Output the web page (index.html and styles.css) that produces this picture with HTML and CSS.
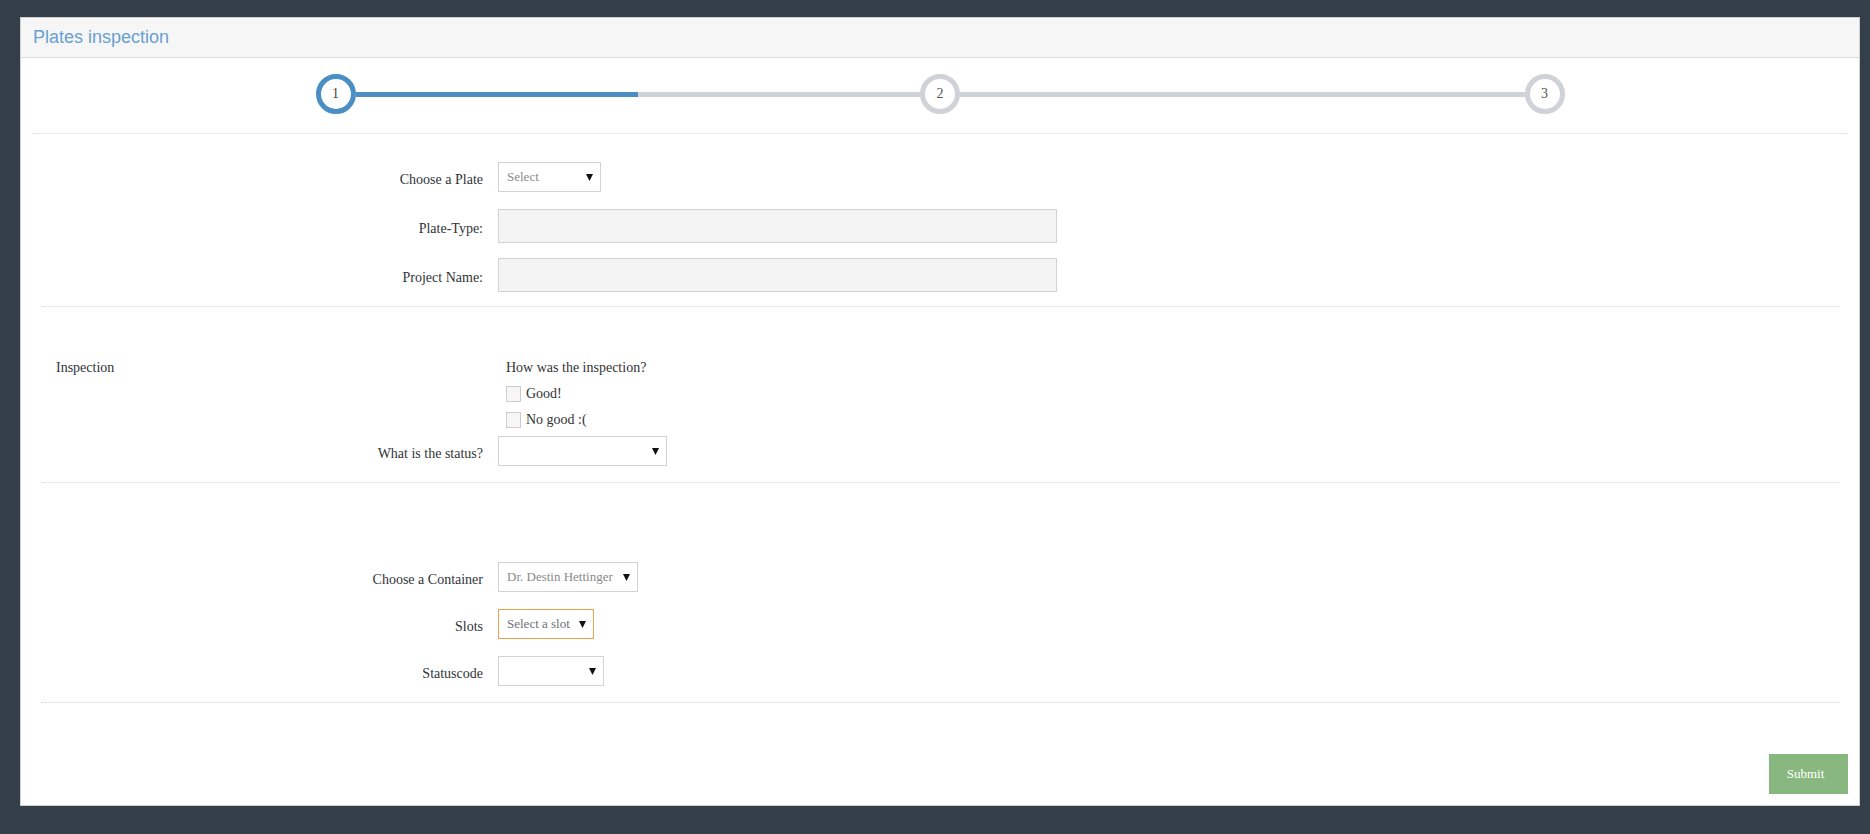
FILE: index.html
```html
<!DOCTYPE html>
<html lang="en">
<head>
<meta charset="utf-8">
<title>Plates inspection</title>
<link rel="stylesheet" href="styles.css">
</head>
<body>
<div class="card">
  <div class="card-header">Plates inspection</div>

  <div class="stepper-wrap">
    <div class="stepper">
      <div class="step active">1</div>
      <div class="track half"></div>
      <div class="step">2</div>
      <div class="track"></div>
      <div class="step">3</div>
    </div>
  </div>

  <section class="section s-plate">
    <div class="row r-select">
      <label class="lbl">Choose a Plate</label>
      <div class="select w-plate"><span class="ph">Select</span><svg class="caret" viewBox="0 0 7 7" width="7" height="7"><polygon points="0,0 7,0 3.5,7"/></svg></div>
    </div>
    <div class="row r-input gap-17">
      <label class="lbl">Plate-Type:</label>
      <input class="text-input" type="text" readonly>
    </div>
    <div class="row r-input">
      <label class="lbl">Project Name:</label>
      <input class="text-input" type="text" readonly>
    </div>
  </section>

  <section class="section s-inspect">
    <div class="row top">
      <div class="lbl legend">Inspection</div>
      <div class="field">
        <div class="question">How was the inspection?</div>
        <label class="check"><input type="checkbox"><span>Good!</span></label>
        <label class="check"><input type="checkbox"><span>No good :(</span></label>
      </div>
    </div>
    <div class="row r-select status-row">
      <label class="lbl">What is the status?</label>
      <div class="select w-status"><span class="ph"></span><svg class="caret" viewBox="0 0 7 7" width="7" height="7"><polygon points="0,0 7,0 3.5,7"/></svg></div>
    </div>
  </section>

  <section class="section s-container">
    <div class="row r-select gap-17">
      <label class="lbl">Choose a Container</label>
      <div class="select w-container"><span class="ph">Dr. Destin Hettinger</span><svg class="caret" viewBox="0 0 7 7" width="7" height="7"><polygon points="0,0 7,0 3.5,7"/></svg></div>
    </div>
    <div class="row r-select gap-17">
      <label class="lbl">Slots</label>
      <div class="select w-slots focus"><span class="ph dark">Select a slot</span><svg class="caret" viewBox="0 0 7 7" width="7" height="7"><polygon points="0,0 7,0 3.5,7"/></svg></div>
    </div>
    <div class="row r-select">
      <label class="lbl">Statuscode</label>
      <div class="select w-code"><span class="ph"></span><svg class="caret" viewBox="0 0 7 7" width="7" height="7"><polygon points="0,0 7,0 3.5,7"/></svg></div>
    </div>
  </section>

  <div class="footer">
    <button class="submit" type="button">Submit</button>
  </div>
</div>
</body>
</html>
```

FILE: styles.css
```css
html, body {
  margin: 0;
  padding: 0;
}
body {
  background: #353f49;
  padding: 17px 10px 28px 20px;
  font-family: "Liberation Serif", "Times New Roman", serif;
  font-size: 14px;
  color: #333333;
}
.card {
  background: #ffffff;
  border: 1px solid #d0d0d0;
}
.card-header {
  height: 39px;
  line-height: 38px;
  padding: 0 12px;
  background: #f6f6f6;
  border-bottom: 1px solid #dddddd;
  font-family: "Liberation Sans", Arial, sans-serif;
  font-size: 18px;
  color: #68a0d2;
}

/* stepper */
.stepper-wrap {
  margin: 0 12px;
  padding: 16px 0 19px;
  border-bottom: 1px solid #e9e9e9;
}
.stepper {
  width: 1249px;
  margin: 0 auto;
  display: flex;
  align-items: center;
}
.step {
  width: 40px;
  height: 40px;
  box-sizing: border-box;
  border: 5px solid #cfd2d6;
  border-radius: 50%;
  display: flex;
  align-items: center;
  justify-content: center;
  font-size: 14px;
  color: #555;
  flex: none;
  background: #fff;
}
.step.active {
  border-color: #4b8ec4;
  color: #444;
}
.track {
  flex: 1;
  height: 5px;
  background: #cfd2d6;
}
.track.half {
  background: linear-gradient(to right, #4b8ec4 0, #4b8ec4 50%, #cfd2d6 50%, #cfd2d6 100%);
}

/* sections */
.section {
  margin: 0 20px;
  border-bottom: 1px dotted #d6d6d6;
}
.s-plate { padding: 28px 0 14px; }
.s-inspect { padding: 51px 0 16px; }
.s-container { padding: 79px 0 16px; }

.row {
  display: flex;
  align-items: center;
  gap: 15px;
}
.row.top { align-items: flex-start; }
.r-select { height: 30px; }
.r-input { height: 34px; }
.s-plate .r-select { margin-bottom: 17px; }
.gap-17 { margin-bottom: 17px; }
.r-input.gap-17 { margin-bottom: 15px; }

.lbl {
  width: 442px;
  flex: none;
  text-align: right;
  color: #2f343a;
  line-height: 20px;
  padding-top: 5px;
  box-sizing: border-box;
}
.lbl.legend {
  text-align: left;
  padding-left: 15px;
  padding-top: 0;
}
.field {
  padding-left: 8px;
}
.question {
  line-height: 20px;
  margin-bottom: 3px;
}
.check {
  display: flex;
  align-items: center;
  height: 26px;
  gap: 5px;
}
.check input {
  appearance: none;
  -webkit-appearance: none;
  width: 15px;
  height: 16px;
  margin: 0;
  border: 1px solid #cccccc;
  background: #f6f6f6;
  border-radius: 0;
}
.status-row { margin-top: 3px; }

/* selects */
.select {
  height: 30px;
  box-sizing: border-box;
  border: 1px solid #d3d3d3;
  background: #fff;
  display: flex;
  align-items: center;
  justify-content: space-between;
  padding: 0 7px 0 8px;
  font-size: 13px;
  flex: none;
}
.select.focus { border-color: #f0a14f; }
.ph { color: #8a8a8a; }
.ph.dark { color: #6b7178; }
.caret { fill: #111; display: block; }
.w-plate { width: 103px; }
.w-status { width: 169px; }
.w-container { width: 140px; }
.w-slots { width: 96px; }
.w-code { width: 106px; }

.text-input {
  width: 559px;
  height: 34px;
  box-sizing: border-box;
  border: 1px solid #d3d3d3;
  background: #f4f4f4;
  margin: 0;
  padding: 0 8px;
  font-family: inherit;
  outline: none;
}

/* footer */
.footer {
  display: flex;
  justify-content: flex-end;
  padding: 51px 11px 11px 0;
}
.submit {
  height: 40px;
  width: 79px;
  border: none;
  background: #88b880;
  color: #ffffff;
  font-family: "Liberation Serif", "Times New Roman", serif;
  font-size: 13px;
  padding: 0 0 0 0;
  text-indent: -6px;
  cursor: pointer;
}
```
